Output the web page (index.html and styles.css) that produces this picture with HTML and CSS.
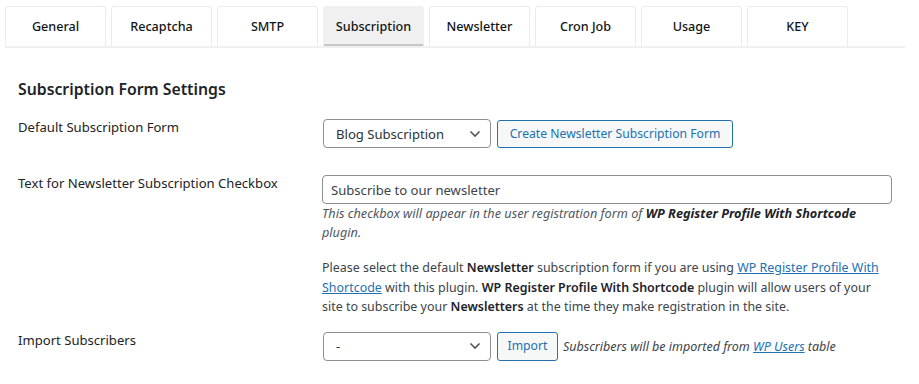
FILE: index.html
```html
<!DOCTYPE html>
<html lang="en">
<head>
<meta charset="utf-8">
<title>Subscription Form Settings</title>
<link rel="stylesheet" href="styles.css">
</head>
<body>
<nav class="tabs">
  <a class="tab">General</a>
  <a class="tab">Recaptcha</a>
  <a class="tab">SMTP</a>
  <a class="tab active">Subscription</a>
  <a class="tab">Newsletter</a>
  <a class="tab">Cron Job</a>
  <a class="tab">Usage</a>
  <a class="tab">KEY</a>
</nav>
<main class="content">
  <h2 class="title">Subscription Form Settings</h2>

  <div class="row row-first">
    <div class="label">Default Subscription Form</div>
    <div class="field inline">
      <div class="select">
        <span>Blog Subscription</span>
        <svg class="chev" width="12" height="8" viewBox="0 0 12 8"><path d="M1.5 1.5 L6 6 L10.5 1.5" fill="none" stroke="#50575e" stroke-width="1.6"/></svg>
      </div>
      <button class="btn btn-wide">Create Newsletter Subscription Form</button>
    </div>
  </div>

  <div class="row row-second">
    <div class="label">Text for Newsletter Subscription Checkbox</div>
    <div class="field wide">
      <div class="input">Subscribe to our newsletter</div>
      <p class="description">This checkbox will appear in the user registration form of <strong>WP Register Profile With Shortcode</strong> plugin.</p>
      <p class="info">Please select the default <strong>Newsletter</strong> subscription form if you are using <a href="#">WP Register Profile With Shortcode</a> with this plugin. <strong>WP Register Profile With Shortcode</strong> plugin will allow users of your site to subscribe your <strong>Newsletters</strong> at the time they make registration in the site.</p>
    </div>
  </div>

  <div class="row row-third">
    <div class="label">Import Subscribers</div>
    <div class="field inline">
      <div class="select">
        <span>-</span>
        <svg class="chev" width="12" height="8" viewBox="0 0 12 8"><path d="M1.5 1.5 L6 6 L10.5 1.5" fill="none" stroke="#50575e" stroke-width="1.6"/></svg>
      </div>
      <button class="btn btn-import">Import</button>
      <span class="note">Subscribers will be imported from <a href="#">WP Users</a> table</span>
    </div>
  </div>
</main>
</body>
</html>
```

FILE: styles.css
```css
* { box-sizing: border-box; }

body {
  margin: 0;
  background: #fff;
  color: #1d2327;
  font-family: "Noto Sans", "Open Sans", sans-serif;
}

.tabs {
  display: flex;
  gap: 5px;
  margin: 6px 14px 0 5px;
  border-bottom: 2px solid #f0f0f1;
}

.tab {
  width: 101px;
  height: 40px;
  display: flex;
  align-items: center;
  justify-content: center;
  border: 1px solid #ececec;
  border-bottom: 0;
  border-radius: 3px 3px 0 0;
  font-size: 12.6px;
  font-weight: 500;
  color: #101517;
  background: #fff;
  text-decoration: none;
}

.tab.active {
  background: #f0f0f1;
  border-color: #f0f0f1;
  box-shadow: inset 0 -2px 0 #c6c7c9;
}

.content {
  padding: 0 18px;
}

.title {
  margin: 31px 0 20px;
  font-size: 15.8px;
  font-weight: 600;
  line-height: 20px;
  color: #1d2327;
}

.row {
  display: flex;
  align-items: flex-start;
}

.row-second { margin-top: 27px; }
.row-third { margin-top: 15px; }

.label {
  width: 305px;
  flex: none;
  font-size: 13.1px;
  line-height: 17px;
  color: #1d2327;
}

.field.inline {
  display: flex;
  align-items: center;
  gap: 6px;
}

.field.wide {
  width: 570px;
  margin-left: -1px;
}

.select {
  width: 168px;
  height: 29px;
  display: flex;
  align-items: center;
  justify-content: space-between;
  padding: 0 9px 0 12px;
  border: 1px solid #8c8f94;
  border-radius: 4px;
  font-size: 13.1px;
  color: #2c3338;
  background: #fff;
}

.chev { flex: none; }

.btn {
  height: 28px;
  padding: 0 10px;
  border: 1px solid #2271b1;
  border-radius: 3px;
  background: #f6f7f7;
  color: #2271b1;
  font-family: inherit;
  font-size: 12.2px;
  line-height: 26px;
}

.btn-wide { width: 236px; }
.btn-import { width: 61px; height: 29px; padding: 0; }

.note {
  margin-left: -1px;
  font-size: 12.5px;
  font-style: italic;
  color: #3c434a;
}

.input {
  height: 29px;
  display: flex;
  align-items: center;
  padding-left: 8px;
  border: 1px solid #8c8f94;
  border-radius: 4px;
  font-size: 13.1px;
  color: #3c434a;
}

.description {
  margin: 0;
  font-size: 12.7px;
  line-height: 19px;
  font-style: italic;
  color: #50575e;
}

.description strong {
  color: #1d2327;
  font-weight: 700;
}

.info {
  margin: 16px 0 0;
  font-size: 12.45px;
  line-height: 19.5px;
  color: #3c434a;
}

.info strong {
  font-weight: 600;
  color: #1d2327;
}

a {
  color: #2271b1;
  text-decoration: underline;
}
```
